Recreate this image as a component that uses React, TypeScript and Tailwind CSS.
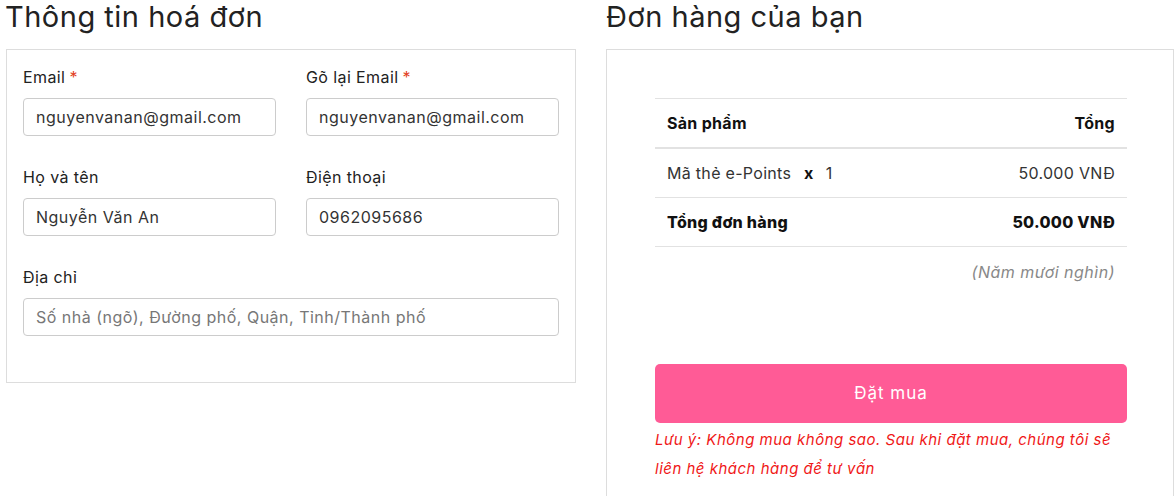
import React from "react";

const font = { fontFamily: "Inter, 'Noto Sans', sans-serif" };

function Field({ label, value, required, placeholder, full }: { label: string; value?: string; required?: boolean; placeholder?: string; full?: boolean }) {
  return (
    <div className={full ? "col-span-2" : ""}>
      <div className="text-[16px] tracking-[0.4px] text-[#222] leading-[20px] h-[20px]">
        {label}
        {required && <span className="text-[#e2401c] ml-1">*</span>}
      </div>
      <div className="mt-[11px] h-[38px] border border-[#ccc] rounded-[4px] flex items-center px-3 text-[16px] tracking-[0.5px]">
        {value ? <span className="text-[#333]">{value}</span> : <span className="text-[#777]">{placeholder}</span>}
      </div>
    </div>
  );
}

export default function App() {
  return (
    <div className="w-[1176px] h-[496px] overflow-hidden bg-white flex" style={font}>
      <div className="w-[570px] ml-[6px] shrink-0">
        <h2 className="text-[29px] leading-[34px] tracking-[0.5px] text-[#222] -ml-[1px]">Thông tin hoá đơn</h2>
        <div className="mt-[15px] border border-[#ddd] px-4 pt-[17px] pb-[46px] grid grid-cols-2 gap-x-[30px] gap-y-[31px]">
          <Field label="Email" required value="nguyenvanan@gmail.com" />
          <Field label="Gõ lại Email" required value="nguyenvanan@gmail.com" />
          <Field label="Họ và tên" value="Nguyễn Văn An" />
          <Field label="Điện thoại" value="0962095686" />
          <Field label="Địa chỉ" full placeholder="Số nhà (ngõ), Đường phố, Quận, Tỉnh/Thành phố" />
        </div>
      </div>
      <div className="ml-[30px] w-[568px] shrink-0">
        <h2 className="text-[29px] leading-[34px] tracking-[0.5px] text-[#222]">Đơn hàng của bạn</h2>
        <div className="mt-[15px] border border-[#ddd] pl-12 pr-[46px] pt-[48px] h-[600px]">
          <div className="border-t border-[#e2e2e2]">
            <div className="flex justify-between items-center h-[50px] pl-3 pr-[12px] border-b-2 border-[#e2e2e2] text-[16px] tracking-[0.3px] font-bold text-[#111]">
              <span>Sản phẩm</span>
              <span>Tổng</span>
            </div>
            <div className="flex justify-between items-center h-[49px] pl-3 pr-[12px] border-b border-[#e2e2e2] text-[16px] tracking-[0.3px] text-[#333]">
              <span>
                Mã thẻ e-Points <b className="ml-[8px] mr-[12px] text-[#111]">x</b>1
              </span>
              <span>50.000 VNĐ</span>
            </div>
            <div className="flex justify-between items-center h-[49px] pl-3 pr-[12px] border-b border-[#e2e2e2] text-[16px] tracking-[0.3px] font-extrabold text-[#111]">
              <span>Tổng đơn hàng</span>
              <span>50.000 VNĐ</span>
            </div>
            <div className="flex justify-end pl-3 pr-[12px] pt-[13px] text-[16px] tracking-[0.5px] italic text-[#888]">(Năm mươi nghìn)</div>
          </div>
          <button className="mt-[80px] w-full h-[59px] rounded-[5px] bg-[#ff5b96] text-white text-[17px] tracking-[1px]">Đặt mua</button>
          <p className="mt-[2px] text-[15px] leading-[29px] tracking-[0.5px] italic text-[#f01818]">
            Lưu ý: Không mua không sao. Sau khi đặt mua, chúng tôi sẽ liên hệ khách hàng để tư vấn
          </p>
        </div>
      </div>
    </div>
  );
}
